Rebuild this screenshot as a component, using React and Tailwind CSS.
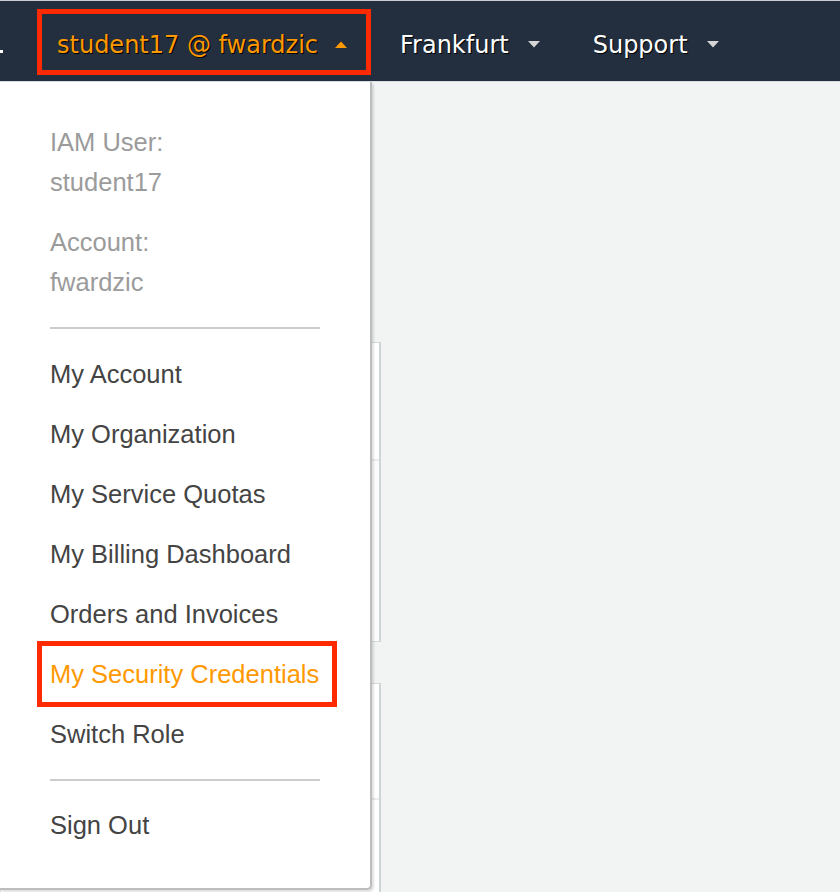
import React from "react";

const navFont = { fontFamily: "'DejaVu Sans', Verdana, sans-serif" };

const Caret = ({ up, color }) => (
  <svg width="14" height="9" viewBox="0 0 14 9" className="shrink-0">
    {up ? (
      <path d="M1 8 L7 1.5 L13 8 Z" fill={color} />
    ) : (
      <path d="M1 1 L13 1 L7 7.5 Z" fill={color} />
    )}
  </svg>
);

const menuItems = [
  "My Account",
  "My Organization",
  "My Service Quotas",
  "My Billing Dashboard",
  "Orders and Invoices",
  "My Security Credentials",
  "Switch Role",
];

const App = () => {
  return (
    <div className="relative w-[840px] h-[892px] overflow-hidden bg-[#f2f3f3]">
      {/* top nav */}
      <div className="border-t border-[#c9cdd1] border-b border-b-[#d8dcde]">
        <div
          className="relative h-[80px] bg-[#232f3e] flex items-center text-[24px] [text-shadow:1px_1px_0_#000]"
          style={navFont}
        >
          <div className="absolute left-0 top-[49px] w-[3px] h-[3px] bg-white" />
          <div className="ml-[37px] mt-[2px] h-[66px] w-[334px] border-[5px] border-[#ff2a00] flex items-center pl-[15px] pr-[18px] justify-between pt-[5px]">
            <span className="text-[#ff9900]">student17 @ fwardzic</span>
            <Caret up color="#ff9900" />
          </div>
          <div className="ml-[29px] flex items-center text-white pt-[7px]">
            <span>Frankfurt</span>
            <span className="ml-[18px]">
              <Caret color="#d5d5d5" />
            </span>
          </div>
          <div className="ml-[52px] flex items-center text-white pt-[7px]">
            <span>Support</span>
            <span className="ml-[18px]">
              <Caret color="#d5d5d5" />
            </span>
          </div>
        </div>
      </div>

      {/* page content behind the menu */}
      <div className="flex flex-col gap-[41px] pt-[260px] w-[381px]">
        <div className="h-[300px] bg-white border border-[#d5dbdb] border-r-2 border-r-[#cfd4d6] flex flex-col">
          <div className="h-[118px] border-b-2 border-[#eaeded]" />
          <div className="flex-1 bg-[#fcfcfc]" />
        </div>
        <div className="h-[260px] bg-white border border-[#d5dbdb] border-r-2 border-r-[#cfd4d6] flex flex-col">
          <div className="h-[116px] border-b-2 border-[#eaeded]" />
          <div className="flex-1" />
        </div>
      </div>

      {/* dropdown menu */}
      <div
        className="absolute left-0 top-[82px] w-[372px] h-[808px] bg-white border-r-2 border-b-2 border-[#bdbdbd] rounded-br-[5px] shadow-[2px_2px_2px_rgba(0,0,0,0.12)] px-[50px] pt-[40px]"
        style={{ fontFamily: "'Liberation Sans', Arial, sans-serif" }}
      >
        <div className="text-[25.5px] leading-[40px] text-[#9b9b9b]">
          <div>IAM User:</div>
          <div>student17</div>
          <div className="mt-[20px]">Account:</div>
          <div>fwardzic</div>
        </div>
        <div className="mt-[25px] h-[2px] w-[270px] bg-[#cccccc]" />
        <div className="mt-[15px] text-[25.5px] leading-[60px] text-[#444444]">
          {menuItems.map((item) =>
            item === "My Security Credentials" ? (
              <div key={item} className="relative text-[#ff9900]">
                <div className="absolute left-[-13px] top-[-3px] w-[300px] h-[66px] border-[5px] border-[#ff2a00]" />
                {item}
              </div>
            ) : (
              <div key={item}>{item}</div>
            )
          )}
        </div>
        <div className="mt-[15px] h-[2px] w-[270px] bg-[#cccccc]" />
        <div className="mt-[14px] text-[25.5px] leading-[60px] text-[#444444]">
          Sign Out
        </div>
      </div>
    </div>
  );
};

export default App;
